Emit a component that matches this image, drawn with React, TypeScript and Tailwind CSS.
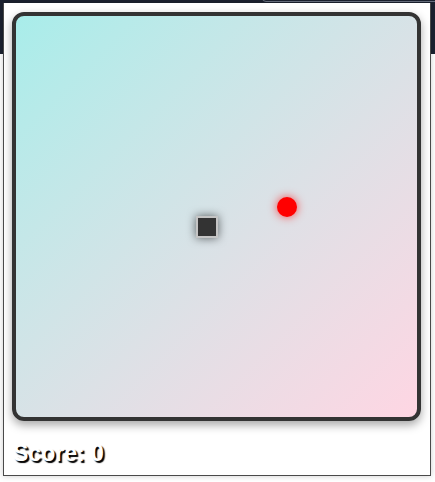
import React from "react";

export default function App() {
  return (
    <div className="relative w-[435px] h-[482px] bg-white overflow-hidden" style={{ fontFamily: '"Liberation Sans", Arial, sans-serif' }}>
      <div className="absolute top-0 left-0 right-0 h-[54px] bg-[#1c2230]">
        <div className="absolute top-[-6px] left-[262px] right-[-10px] h-[8px] rounded-[6px] border border-[#6b7383]" />
      </div>
      <div className="relative z-10 ml-[3px] mt-[3px] w-[428px] h-[473px] bg-white border border-[#4a4a4a] border-t-0 shadow-[0_0_6px_rgba(0,0,0,0.2)] px-[8px] pt-[9px] flex flex-col">
        <div className="relative w-[409px] h-[409px] border-4 border-[#333] rounded-[12px] bg-gradient-to-br from-[#a8edea] to-[#fed6e3] shadow-[0_4px_10px_rgba(0,0,0,0.35)] overflow-hidden">
          <div className="absolute left-[180px] top-[200px] w-[22px] h-[22px] bg-[#333] border-2 border-[#c4c4c4] shadow-[0_0_10px_rgba(0,0,0,0.6)]" />
          <div className="absolute left-[261px] top-[181px] w-[20px] h-[20px] rounded-full bg-[#ff0000] shadow-[0_0_10px_rgba(255,0,0,0.7)]" />
        </div>
        <div className="mt-[19px] ml-[1px] text-[23px] leading-[27px] font-bold text-white [text-shadow:2px_2px_1px_#000]">
          Score: 0
        </div>
      </div>
    </div>
  );
}
